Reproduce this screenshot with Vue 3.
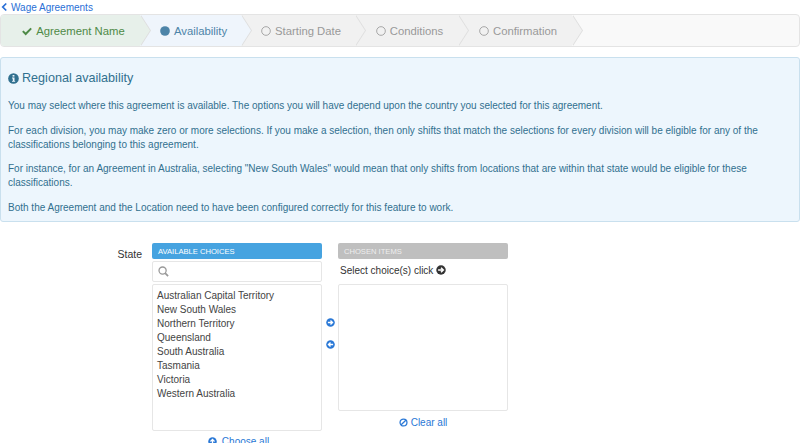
<template>
  <div class="page">
    <a class="back-link">
      <svg class="icon-back" viewBox="0 0 8 10"><path d="M6 1 2 5l4 4" fill="none" stroke="currentColor" stroke-width="2" /></svg>
      Wage Agreements
    </a>

    <!-- Pasos del asistente -->
    <div class="steps">
      <div v-for="step in steps" :key="step.label" class="step" :class="step.state" :style="{ width: step.width + 'px' }">
        <svg v-if="step.state === 'done'" class="step-icon" viewBox="0 0 12 12"><path d="M1 6.2 4.4 9.6 11 2.8" fill="none" stroke="currentColor" stroke-width="2.4" /></svg>
        <svg v-else class="step-icon" viewBox="0 0 12 12">
          <circle v-if="step.state === 'active'" cx="6" cy="6" r="5.8" fill="currentColor" />
          <circle v-else cx="6" cy="6" r="5.2" fill="none" stroke="currentColor" stroke-width="1" />
        </svg>
        <span>{{ step.label }}</span>
      </div>
    </div>

    <div class="alert">
      <h4 class="alert-title">
        <svg class="info-icon" viewBox="0 0 12 12">
          <circle cx="6" cy="6" r="5.8" fill="currentColor" />
          <rect x="5" y="2.2" width="2" height="1.7" fill="#edf6fd" />
          <path d="M4.4 5h2.7v3.6h.7v1H4.4v-1h.8V6h-.8z" fill="#edf6fd" />
        </svg>
        Regional availability
      </h4>
      <p>You may select where this agreement is available. The options you will have depend upon the country you selected for this agreement.</p>
      <p>For each division, you may make zero or more selections. If you make a selection, then only shifts that match the selections for every division will be eligible for any of the classifications belonging to this agreement.</p>
      <p>For instance, for an Agreement in Australia, selecting "New South Wales" would mean that only shifts from locations that are within that state would be eligible for these classifications.</p>
      <p>Both the Agreement and the Location need to have been configured correctly for this feature to work.</p>
    </div>

    <div class="picker">
      <label class="picker-label">State</label>

      <div class="col">
        <div class="col-head available">AVAILABLE CHOICES</div>
        <div class="search">
          <svg class="search-icon" viewBox="0 0 12 12"><circle cx="5" cy="5" r="3.9" fill="none" stroke="currentColor" stroke-width="1.4" /><path d="M7.8 7.8 11 11" stroke="currentColor" stroke-width="1.9" /></svg>
        </div>
        <ul class="list list-available">
          <li v-for="item in choices" :key="item">{{ item }}</li>
        </ul>
        <a class="col-action choose-all">
          <svg class="action-icon" viewBox="0 0 12 12"><circle cx="6" cy="6" r="5.7" fill="currentColor" /><path d="M6 9.5V3.4M3.3 6 6 3.2 8.7 6" fill="none" stroke="#fff" stroke-width="1.7" /></svg>
          Choose all
        </a>
      </div>

      <div class="arrows">
        <svg class="arrow" viewBox="0 0 12 12"><circle cx="6" cy="6" r="5.7" fill="currentColor" /><path d="M2.5 6h6M6 3.3 8.8 6 6 8.7" fill="none" stroke="#fff" stroke-width="1.7" /></svg>
        <svg class="arrow" viewBox="0 0 12 12"><circle cx="6" cy="6" r="5.7" fill="currentColor" /><path d="M9.5 6h-6M6 3.3 3.2 6 6 8.7" fill="none" stroke="#fff" stroke-width="1.7" /></svg>
      </div>

      <div class="col">
        <div class="col-head chosen">CHOSEN ITEMS</div>
        <div class="hint">
          Select choice(s) click
          <svg class="hint-icon" viewBox="0 0 12 12"><circle cx="6" cy="6" r="5.7" fill="currentColor" /><path d="M2.5 6h6M6 3.3 8.8 6 6 8.7" fill="none" stroke="#fff" stroke-width="1.7" /></svg>
        </div>
        <div class="list list-chosen"></div>
        <a class="col-action">
          <svg class="action-icon" viewBox="0 0 12 12"><circle cx="6" cy="6" r="4.6" fill="none" stroke="currentColor" stroke-width="1.7" /><path d="M2.9 9.1 9.1 2.9" stroke="currentColor" stroke-width="1.7" /></svg>
          Clear all
        </a>
      </div>
    </div>
  </div>
</template>

<script setup>
const steps = [
  { label: 'Agreement Name', state: 'done', width: 139 },
  { label: 'Availability', state: 'active', width: 101 },
  { label: 'Starting Date', state: 'todo', width: 114 },
  { label: 'Conditions', state: 'todo', width: 103 },
  { label: 'Confirmation', state: 'todo', width: 114 }
]

const choices = [
  'Australian Capital Territory',
  'New South Wales',
  'Northern Territory',
  'Queensland',
  'South Australia',
  'Tasmania',
  'Victoria',
  'Western Australia'
]
</script>

<style>
html,
body {
  margin: 0;
  overflow: hidden;
}
</style>

<style scoped>
.page {
  height: 443px;
  overflow: hidden;
  background: #fff;
  color: #333;
  font-family: "Liberation Sans", Arial, sans-serif;
  font-size: 10px;
}

.back-link {
  display: flex;
  align-items: center;
  gap: 3px;
  height: 14px;
  padding-left: 1px;
  font-size: 10px;
  color: #2a6fd6;
}

.icon-back {
  width: 7px;
  height: 10px;
}

.steps {
  display: flex;
  box-sizing: border-box;
  height: 33px;
  border: 1px solid #e4e4e4;
  border-radius: 4px;
  background: #f9f9f9;
}

.step {
  position: relative;
  display: flex;
  align-items: center;
  justify-content: center;
  gap: 4px;
  box-sizing: border-box;
  padding-left: 6px;
  font-size: 11.3px;
  color: #999;
  background: #f1f1f1;
}

.step::before,
.step::after {
  content: "";
  position: absolute;
  top: 0;
  bottom: 0;
  width: 10px;
  clip-path: polygon(0 0, 100% 50%, 0 100%);
}

.step::before {
  left: calc(100% + 1px);
  background: #dedede;
  z-index: 1;
}

.step::after {
  left: 100%;
  background: inherit;
  z-index: 2;
}

.step.done {
  color: #4e8a47;
  background: #e7f0ea;
  border-radius: 3px 0 0 3px;
}

.step.active {
  color: #4d84a8;
  background: #eff5fc;
}

.step-icon {
  width: 10px;
  height: 10px;
  flex: none;
}

.alert {
  box-sizing: border-box;
  height: 165px;
  margin-top: 10px;
  padding: 11px 7px 0;
  background: #edf6fd;
  border: 1px solid #c9e0ee;
  border-radius: 3px;
  color: #31708f;
  font-size: 10px;
  line-height: 14px;
}

.alert-title {
  display: flex;
  align-items: center;
  gap: 3px;
  margin: 0 0 12px;
  font-size: 12.6px;
  font-weight: 400;
  line-height: 18px;
}

.info-icon {
  width: 11px;
  height: 11px;
}

.alert p {
  margin: 0 0 10.6px;
}

.picker {
  display: flex;
  margin-top: 21px;
  font-size: 10px;
}

.picker-label {
  width: 142px;
  margin-right: 10px;
  padding-top: 5px;
  text-align: right;
  font-size: 10.5px;
}

.col {
  width: 170px;
}

.col-head {
  height: 16px;
  padding-left: 6px;
  border-radius: 2px;
  color: #fff;
  font-size: 7.6px;
  line-height: 17px;
}

.available {
  background: #46a3e0;
}

.chosen {
  background: #bfbfbf;
  color: #eee;
}

.search {
  box-sizing: border-box;
  display: flex;
  align-items: center;
  height: 21px;
  margin: 2px 0;
  padding-left: 5px;
  border: 1px solid #e6e6e6;
  border-radius: 2px;
  color: #999;
}

.search-icon {
  width: 11px;
  height: 11px;
}

.hint {
  display: flex;
  align-items: center;
  gap: 3px;
  height: 22px;
  margin-bottom: 3px;
  padding-left: 2px;
  color: #333;
}

.hint-icon {
  width: 10px;
  height: 10px;
}

.list {
  box-sizing: border-box;
  margin: 0;
  padding: 4px 4px;
  list-style: none;
  border: 1px solid #e6e6e6;
  border-radius: 2px;
  color: #444;
  line-height: 14px;
}

.list-available {
  height: 147px;
}

.list-chosen {
  height: 127px;
}

.col-action {
  display: flex;
  align-items: center;
  justify-content: center;
  gap: 3px;
  margin-top: 5px;
  height: 12px;
  color: #2a78d6;
  font-size: 10px;
}

.choose-all {
  gap: 5px;
  margin-top: 4px;
  padding-left: 3px;
}

.action-icon {
  width: 9px;
  height: 9px;
}

.arrows {
  display: flex;
  flex-direction: column;
  align-items: center;
  gap: 13px;
  width: 16px;
  padding-top: 75px;
  color: #2a78d6;
}

.arrow {
  width: 9px;
  height: 9px;
}
</style>
